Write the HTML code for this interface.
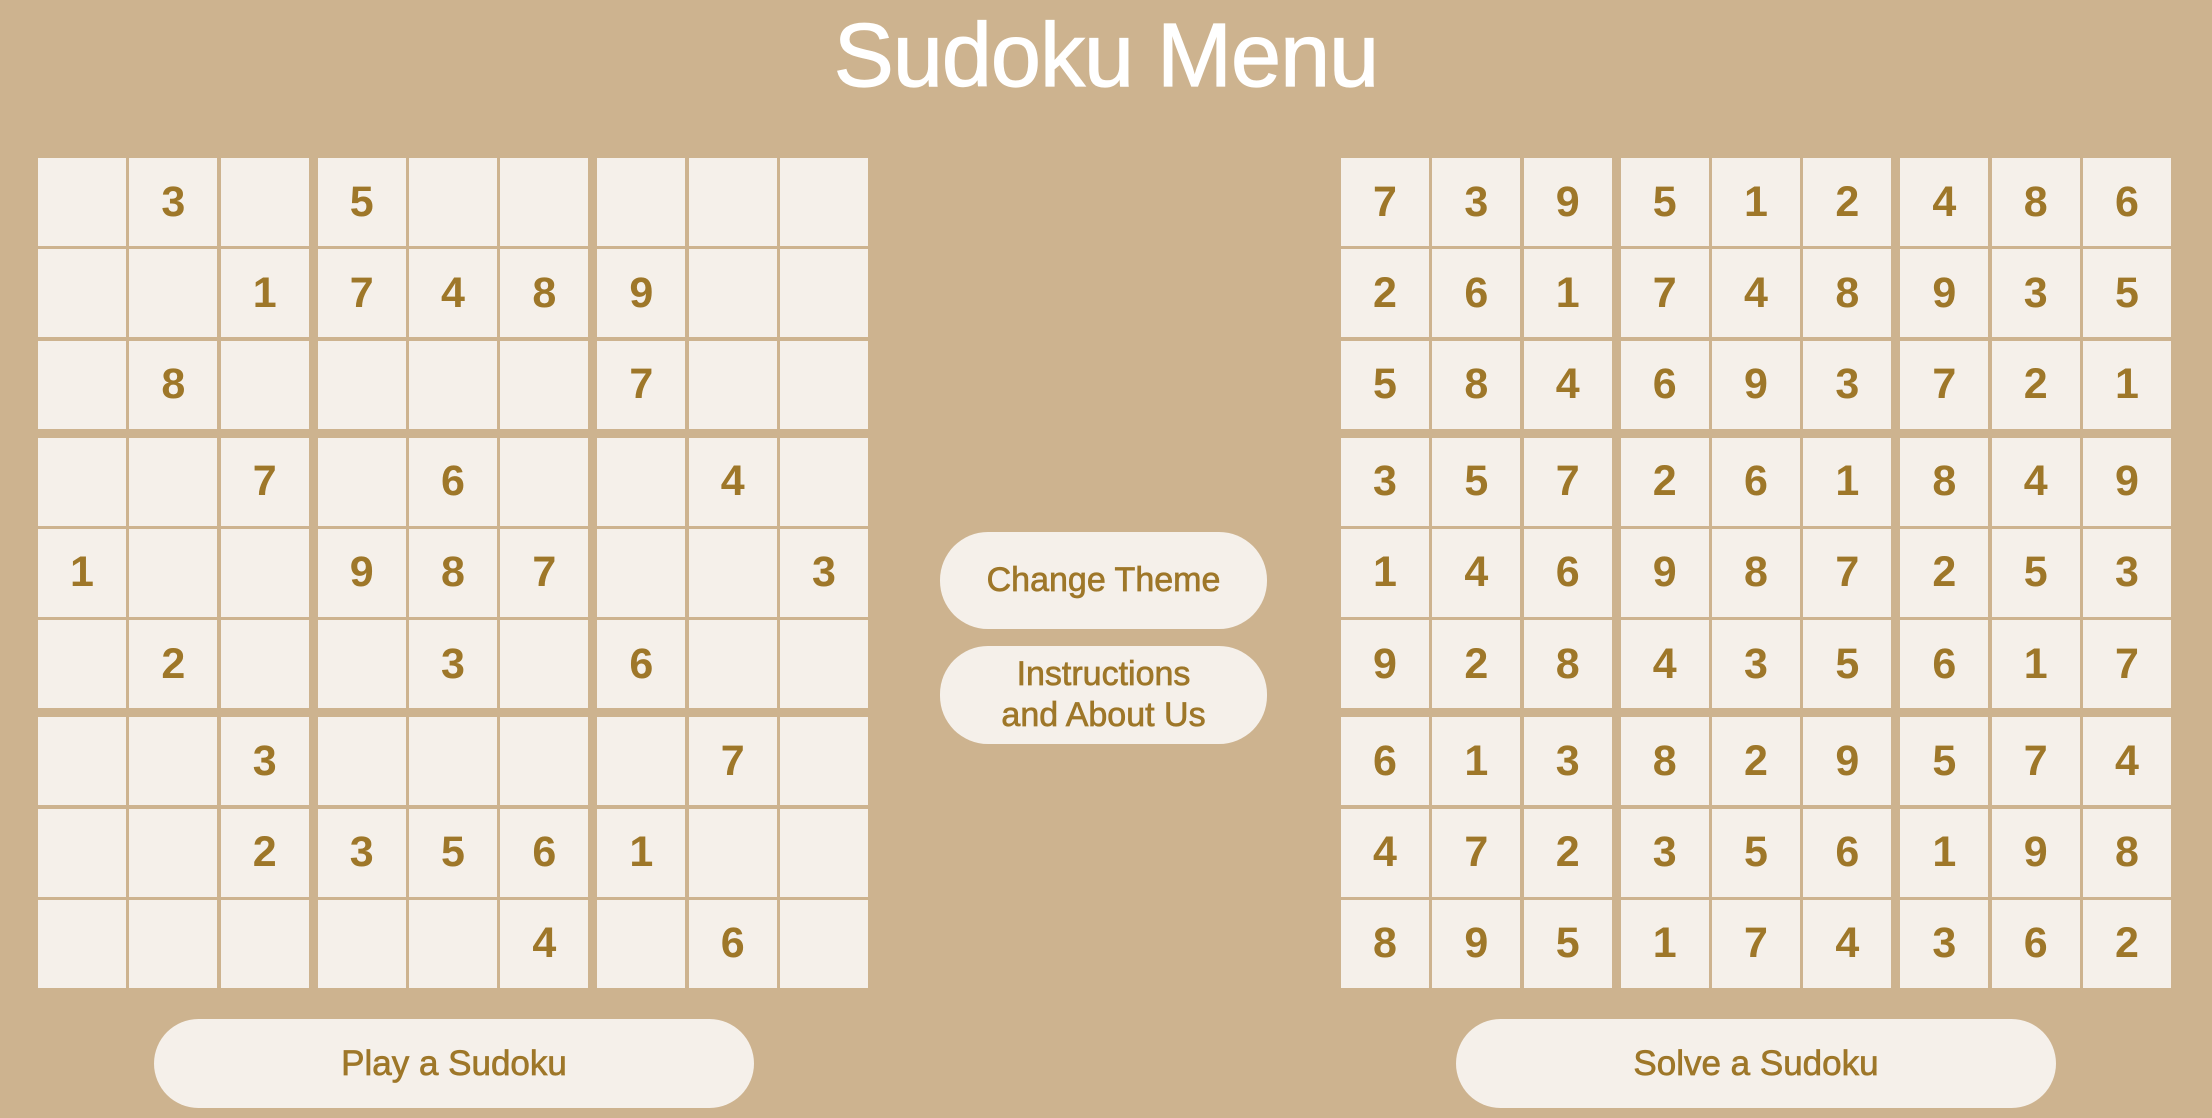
<!DOCTYPE html>
<html><head><meta charset="utf-8"><style>
html,body{margin:0;padding:0}
body{width:2212px;height:1118px;background:#cdb38f;position:relative;overflow:hidden;font-family:"Liberation Sans",Arial,sans-serif}
h1{position:absolute;left:0;width:2212px;top:4px;margin:0;text-align:center;color:#fff;font-weight:normal;font-size:90px;line-height:104px;letter-spacing:-1px;-webkit-text-stroke:1.2px #fff}
.g{position:absolute;top:158px;width:830px;height:830px;display:grid;grid-template-columns:repeat(3,1fr);grid-template-rows:repeat(3,1fr);gap:9px}
.b{display:grid;grid-template-columns:repeat(3,88px);grid-template-rows:repeat(3,88px);gap:3.33px}
.b div{background:#f5f0ea;color:#9e7729;font-weight:bold;font-size:43px;display:flex;align-items:center;justify-content:center}
.btn{position:absolute;background:#f5f0ea;color:#9e7729;display:flex;align-items:center;justify-content:center;text-align:center;-webkit-text-stroke:0.7px #9e7729}
</style></head><body>
<h1>Sudoku Menu</h1>
<div class="g" style="left:38px">
<div class="b"><div></div><div>3</div><div></div><div></div><div></div><div>1</div><div></div><div>8</div><div></div></div>
<div class="b"><div>5</div><div></div><div></div><div>7</div><div>4</div><div>8</div><div></div><div></div><div></div></div>
<div class="b"><div></div><div></div><div></div><div>9</div><div></div><div></div><div>7</div><div></div><div></div></div>
<div class="b"><div></div><div></div><div>7</div><div>1</div><div></div><div></div><div></div><div>2</div><div></div></div>
<div class="b"><div></div><div>6</div><div></div><div>9</div><div>8</div><div>7</div><div></div><div>3</div><div></div></div>
<div class="b"><div></div><div>4</div><div></div><div></div><div></div><div>3</div><div>6</div><div></div><div></div></div>
<div class="b"><div></div><div></div><div>3</div><div></div><div></div><div>2</div><div></div><div></div><div></div></div>
<div class="b"><div></div><div></div><div></div><div>3</div><div>5</div><div>6</div><div></div><div></div><div>4</div></div>
<div class="b"><div></div><div>7</div><div></div><div>1</div><div></div><div></div><div></div><div>6</div><div></div></div>
</div>
<div class="g" style="left:1341px">
<div class="b"><div>7</div><div>3</div><div>9</div><div>2</div><div>6</div><div>1</div><div>5</div><div>8</div><div>4</div></div>
<div class="b"><div>5</div><div>1</div><div>2</div><div>7</div><div>4</div><div>8</div><div>6</div><div>9</div><div>3</div></div>
<div class="b"><div>4</div><div>8</div><div>6</div><div>9</div><div>3</div><div>5</div><div>7</div><div>2</div><div>1</div></div>
<div class="b"><div>3</div><div>5</div><div>7</div><div>1</div><div>4</div><div>6</div><div>9</div><div>2</div><div>8</div></div>
<div class="b"><div>2</div><div>6</div><div>1</div><div>9</div><div>8</div><div>7</div><div>4</div><div>3</div><div>5</div></div>
<div class="b"><div>8</div><div>4</div><div>9</div><div>2</div><div>5</div><div>3</div><div>6</div><div>1</div><div>7</div></div>
<div class="b"><div>6</div><div>1</div><div>3</div><div>4</div><div>7</div><div>2</div><div>8</div><div>9</div><div>5</div></div>
<div class="b"><div>8</div><div>2</div><div>9</div><div>3</div><div>5</div><div>6</div><div>1</div><div>7</div><div>4</div></div>
<div class="b"><div>5</div><div>7</div><div>4</div><div>1</div><div>9</div><div>8</div><div>3</div><div>6</div><div>2</div></div>
</div>
<div class="btn" style="left:940px;top:532px;width:327px;height:97px;border-radius:48px;font-size:34px">Change Theme</div>
<div class="btn" style="left:940px;top:646px;width:327px;height:98px;border-radius:48px;font-size:34px;line-height:41px">Instructions<br>and About Us</div>
<div class="btn" style="left:154px;top:1019px;width:600px;height:89px;border-radius:45px;font-size:35px">Play a Sudoku</div>
<div class="btn" style="left:1456px;top:1019px;width:600px;height:89px;border-radius:45px;font-size:35px">Solve a Sudoku</div>
</body></html>
